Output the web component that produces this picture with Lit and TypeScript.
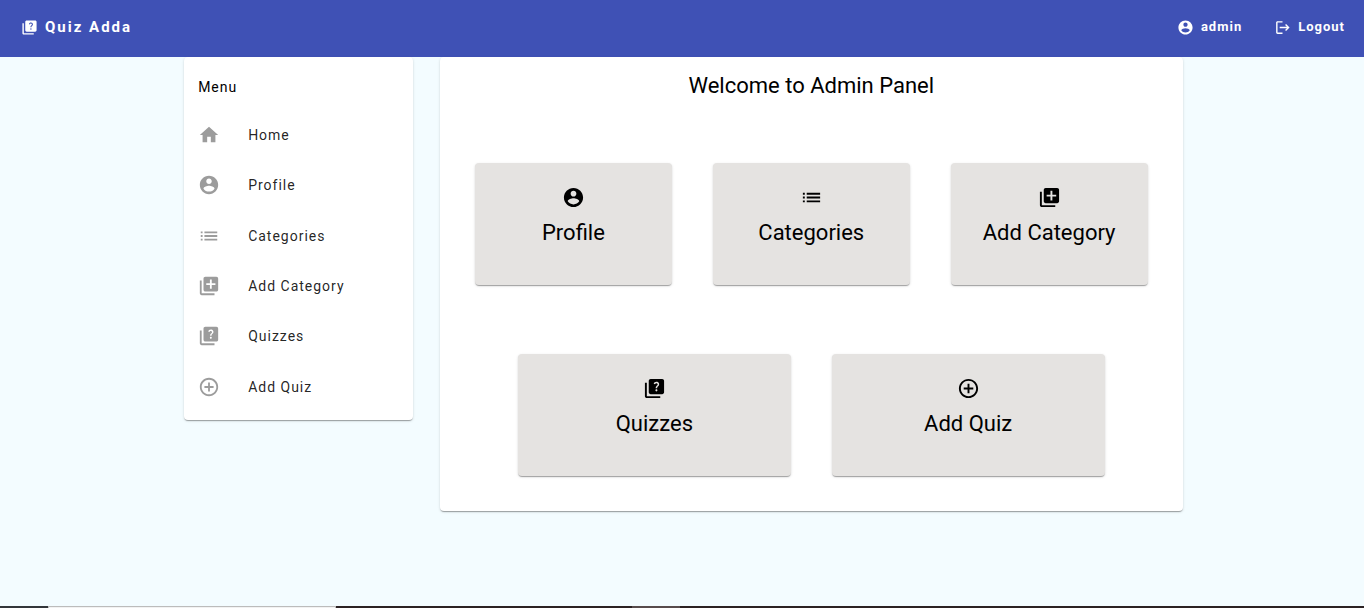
import { LitElement, html, css, svg } from "lit";
import { customElement, property } from "lit/decorators.js";

const shapes: Record<string, string> = {
  home: "M10 20v-6h4v6h5v-8h3L12 3 2 12h3v8z",
  account:
    "M12 2C6.48 2 2 6.48 2 12s4.48 10 10 10 10-4.48 10-10S17.52 2 12 2zm0 3c1.66 0 3 1.34 3 3s-1.34 3-3 3-3-1.34-3-3 1.34-3 3-3zm0 14.2c-2.5 0-4.71-1.28-6-3.22.03-1.99 4-3.08 6-3.08 1.99 0 5.97 1.09 6 3.08-1.29 1.94-3.5 3.22-6 3.22z",
  list: "M3 13h2v-2H3v2zm0 4h2v-2H3v2zm0-8h2V7H3v2zm4 4h14v-2H7v2zm0 4h14v-2H7v2zM7 7v2h14V7H7z",
  library:
    "M4 6H2v14c0 1.1.9 2 2 2h14v-2H4V6zm16-4H8c-1.1 0-2 .9-2 2v12c0 1.1.9 2 2 2h12c1.1 0 2-.9 2-2V4c0-1.1-.9-2-2-2zm-1 9h-4v4h-2v-4H9V9h4V5h2v4h4v2z",
  quiz: "M4 6H2v14c0 1.1.9 2 2 2h14v-2H4V6zm16-4H8c-1.1 0-2 .9-2 2v12c0 1.1.9 2 2 2h12c1.1 0 2-.9 2-2V4c0-1.1-.9-2-2-2zm-5.99 13c-.59 0-1.05-.47-1.05-1.05 0-.59.47-1.04 1.05-1.04.59 0 1.04.45 1.04 1.04-.01.58-.45 1.05-1.04 1.05zm2.5-6.17c-.63.93-1.23 1.21-1.56 1.81-.13.24-.18.4-.18 1.18h-1.52c0-.41-.06-1.08.26-1.65.41-.73 1.18-1.16 1.63-1.8.48-.68.21-1.94-1.14-1.94-.88 0-1.32.67-1.5 1.23l-1.37-.57C11.51 5.96 12.52 5 13.99 5c1.23 0 2.08.56 2.51 1.26.37.6.58 1.73.01 2.57z",
  add: "M13 7h-2v4H7v2h4v4h2v-4h4v-2h-4V7zm-1-5C6.48 2 2 6.48 2 12s4.48 10 10 10 10-4.48 10-10S17.52 2 12 2zm0 18c-4.41 0-8-3.59-8-8s3.59-8 8-8 8 3.59 8 8-3.59 8-8 8z",
  logout:
    "M5 3h7v2H5v14h7v2H5c-1.1 0-2-.9-2-2V5c0-1.1.9-2 2-2zM17 7l5 5-5 5-1.400-1.400L18.200 13H8v-2h10.200l-2.600-2.600z",
};

@customElement("app-icon")
export class AppIcon extends LitElement {
  @property() name = "";

  static styles = css`
    :host {
      display: block;
      flex: none;
      width: 24px;
      height: 24px;
    }
    .glyph {
      display: block;
      width: 100%;
      height: 100%;
      fill: currentColor;
    }
  `;

  render() {
    return html`<svg class="glyph" viewBox="0 0 24 24" aria-hidden="true">
      ${svg`<path d=${shapes[this.name]}></path>`}
    </svg>`;
  }
}

interface Entry {
  icon: string;
  label: string;
}

const profile: Entry = { icon: "account", label: "Profile" };
const categories: Entry = { icon: "list", label: "Categories" };
const addCategory: Entry = { icon: "library", label: "Add Category" };
const quizzes: Entry = { icon: "quiz", label: "Quizzes" };
const addQuiz: Entry = { icon: "add", label: "Add Quiz" };

const menu: Entry[] = [
  { icon: "home", label: "Home" },
  profile,
  categories,
  addCategory,
  quizzes,
  addQuiz,
];

@customElement("app-root")
export class AppRoot extends LitElement {
  static styles = css`
    :host {
      display: flex;
      flex-direction: column;
      min-height: 100vh;
      background: #f3fcff;
      color: #000;
      font-family: Roboto, "Liberation Sans", sans-serif;
      font-size: 14px;
    }
    a {
      color: inherit;
      text-decoration: none;
    }
    .bar {
      display: flex;
      align-items: center;
      justify-content: space-between;
      box-sizing: border-box;
      height: 57px;
      padding: 0 19px 3px 21px;
      background: #3f51b5;
      color: #fff;
      font-weight: 700;
      letter-spacing: 1px;
    }
    .brand,
    .action {
      display: flex;
      align-items: center;
      gap: 7px;
      line-height: 24px;
    }
    .brand {
      font-size: 15px;
      letter-spacing: 2px;
    }
    .actions {
      display: flex;
      gap: 32px;
    }
    .action {
      border: 0;
      padding: 0;
      background: none;
      color: inherit;
      font: inherit;
      font-size: 13px;
      letter-spacing: 1px;
      line-height: 24px;
      cursor: pointer;
    }
    .small {
      width: 17px;
      height: 17px;
      margin-top: 1px;
    }
    .page {
      flex: 1;
      display: grid;
      grid-template-columns: 229fr 743fr;
      align-items: start;
      gap: 27px;
      margin: 0 13.3% 0 13.5%;
    }
    .card {
      border-radius: 4px;
      background: #fff;
      box-shadow:
        0 2px 1px -1px rgba(0, 0, 0, 0.2),
        0 1px 1px 0 rgba(0, 0, 0, 0.14),
        0 1px 3px 0 rgba(0, 0, 0, 0.12);
    }
    .side {
      padding: 18px 14px 8px;
    }
    .heading {
      margin: 0;
      font-size: 14px;
      font-weight: 400;
      line-height: 24px;
      letter-spacing: 1px;
    }
    .list {
      display: grid;
      grid-auto-rows: 1fr;
      height: 302px;
      margin: 11px 0 0;
      padding: 0;
      list-style: none;
    }
    .item {
      display: flex;
      align-items: center;
      gap: 28px;
      height: 100%;
      color: rgba(0, 0, 0, 0.87);
      letter-spacing: 1px;
    }
    .muted {
      width: 22px;
      height: 22px;
      color: #9c9c9c;
    }
    .main {
      padding: 15px 35px 35px;
    }
    .title {
      margin: 0 0 63px;
      font-size: 22px;
      font-weight: 400;
      line-height: 28px;
      text-align: center;
    }
    .tiles {
      display: grid;
      grid-auto-flow: column;
      grid-auto-columns: 1fr;
      gap: 41px;
    }
    .lower {
      margin: 69px 43px 0;
    }
    .tile {
      display: flex;
      flex-direction: column;
      align-items: center;
      gap: 9px;
      padding: 23px 8px 37px;
      background: #e5e3e1;
      font-size: 22px;
      line-height: 30px;
    }
    .dark {
      width: 23px;
      height: 23px;
    }
    .strip {
      display: flex;
      height: 2px;
      background: #2b2223;
    }
    .start {
      width: 48px;
      background: #33363a;
    }
    .search {
      box-sizing: border-box;
      width: 288px;
      border: 1px solid #bcbcbc;
      border-bottom: 0;
      background: #f2f2f2;
    }
    .active {
      width: 48px;
      margin-left: 296px;
      background: #574c4c;
    }
  `;

  private tile(entry: Entry) {
    return html`<a class="card tile" href="#">
      <app-icon class="dark" name=${entry.icon}></app-icon>
      <span>${entry.label}</span>
    </a>`;
  }

  render() {
    return html`
      <header class="bar">
        <a class="brand" href="#">
          <app-icon class="small" name="quiz"></app-icon>Quiz Adda
        </a>
        <div class="actions">
          <a class="action" href="#">
            <app-icon class="small" name="account"></app-icon>admin
          </a>
          <button class="action" type="button">
            <app-icon class="small" name="logout"></app-icon>Logout
          </button>
        </div>
      </header>
      <div class="page">
        <nav class="card side" aria-labelledby="menu-heading">
          <h2 class="heading" id="menu-heading">Menu</h2>
          <ul class="list">
            ${menu.map(
              (entry) => html`<li>
                <a class="item" href="#">
                  <app-icon class="muted" name=${entry.icon}></app-icon>
                  <span>${entry.label}</span>
                </a>
              </li>`
            )}
          </ul>
        </nav>
        <main class="card main">
          <h1 class="title">Welcome to Admin Panel</h1>
          <div class="tiles">
            ${[profile, categories, addCategory].map((e) => this.tile(e))}
          </div>
          <div class="tiles lower">
            ${[quizzes, addQuiz].map((e) => this.tile(e))}
          </div>
        </main>
      </div>
      <footer class="strip">
        <div class="start"></div>
        <div class="search"></div>
        <div class="active"></div>
      </footer>
    `;
  }
}
